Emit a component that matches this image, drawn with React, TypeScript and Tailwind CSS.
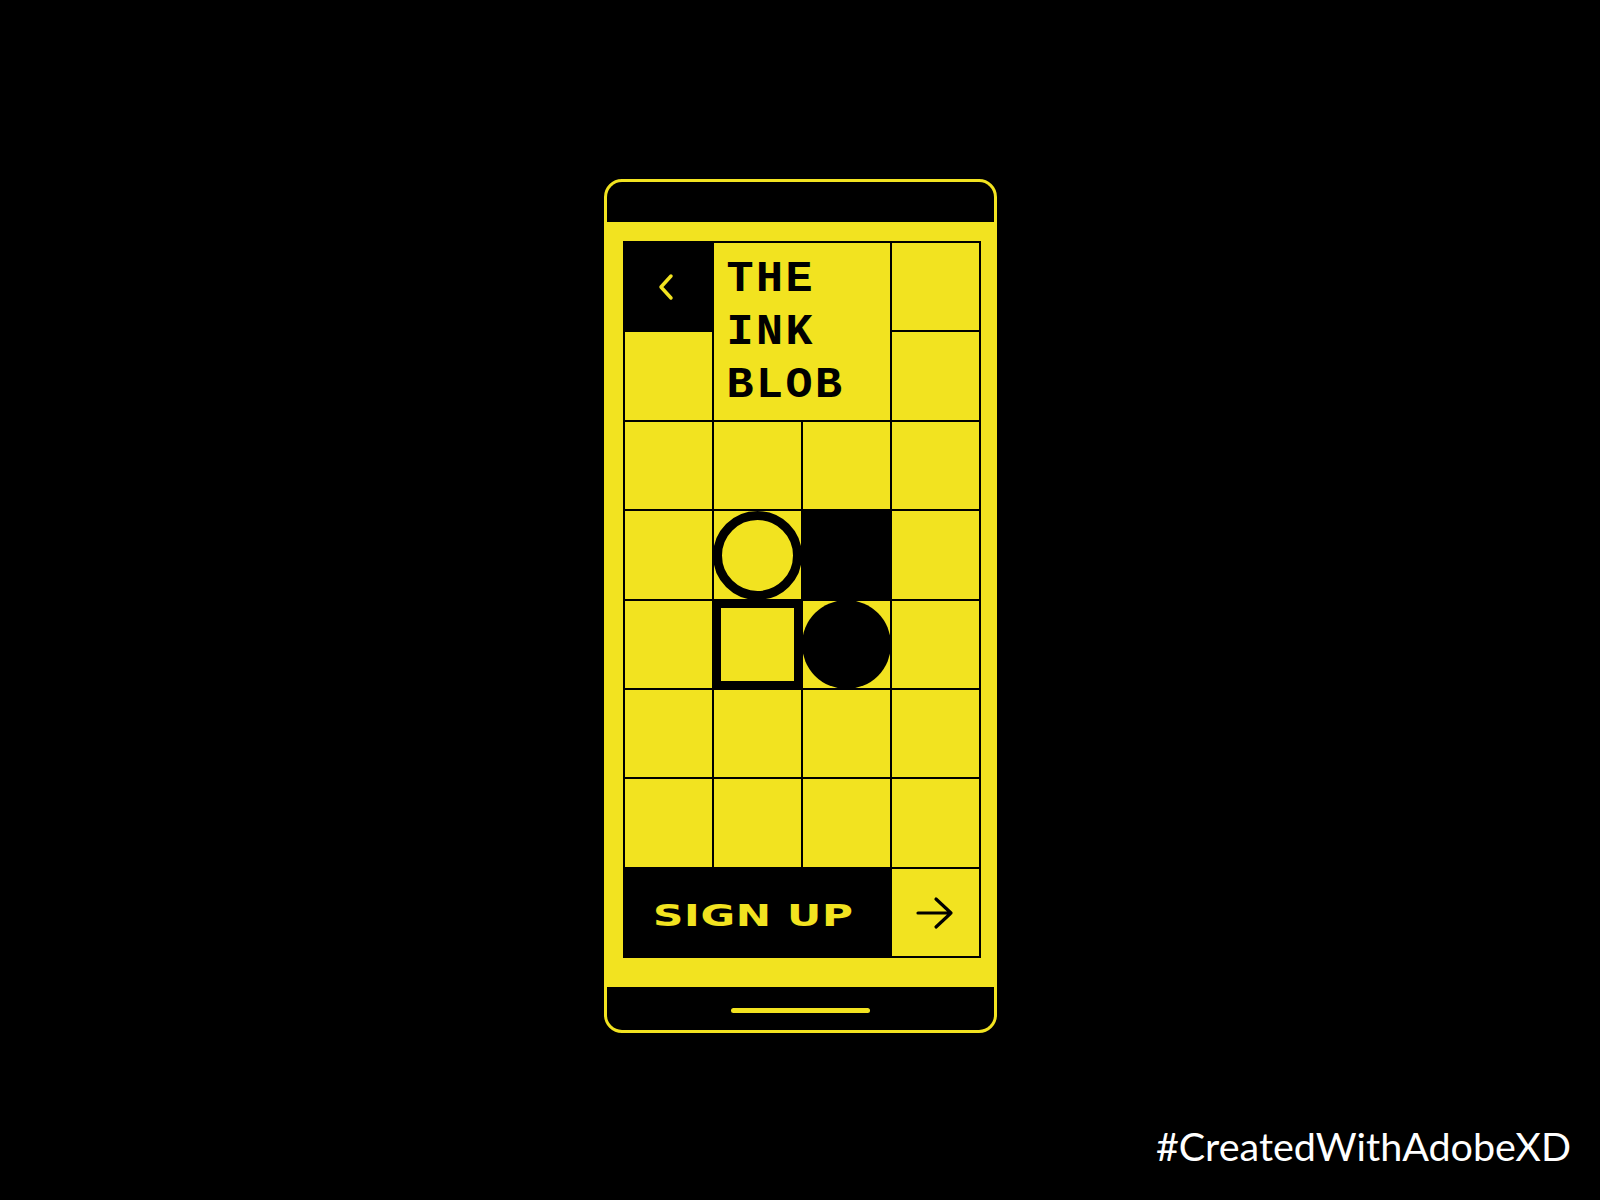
import React from "react";

function Cell({ className = "", children }: { className?: string; children?: React.ReactNode }) {
  return <div className={`bg-[#f2e320] ${className}`}>{children}</div>;
}

function BackChevron() {
  return (
    <svg width="18" height="28" viewBox="0 0 18 28" fill="none">
      <polyline points="14,3 4,14 14,25" stroke="#f2e320" strokeWidth="3.5" strokeLinecap="round" strokeLinejoin="round" />
    </svg>
  );
}

function ArrowRight() {
  return (
    <svg width="38" height="34" viewBox="0 0 38 34" fill="none">
      <path d="M2 17H35M20 3L35 17L20 31" stroke="#000" strokeWidth="3.2" strokeLinecap="round" strokeLinejoin="round" />
    </svg>
  );
}

export default function App() {
  return (
    <div className="relative flex h-[1200px] w-full flex-col items-center bg-black pt-[179px]">
      {/* phone */}
      <div className="flex h-[854px] w-[393px] flex-col overflow-hidden rounded-[18px] border-[3px] border-[#f2e320] bg-[#f2e320]">
        <div className="h-[40px] bg-black" />

        <div className="flex-1 pl-[16px] pt-[19px]">
          <div className="grid w-fit grid-cols-[repeat(4,87px)] grid-rows-[87px_88px_87px_88px_87px_87px_88px_87px] gap-[2px] border-2 border-black bg-black">
            {/* back button */}
            <div className="flex items-center justify-center bg-black pr-[4px]">
              <BackChevron />
            </div>
            {/* title */}
            <Cell className="col-span-2 row-span-2 pl-[13px] pt-[10px]">
              <h1 className="font-['Liberation_Mono',monospace] text-[45px] font-bold leading-[53px] tracking-[2.5px] text-black">
                THE
                <br />
                INK
                <br />
                BLOB
              </h1>
            </Cell>
            <Cell />
            <Cell />
            <Cell />

            {/* row 3 */}
            <Cell />
            <Cell />
            <Cell />
            <Cell />

            {/* row 4 */}
            <Cell />
            <Cell className="flex items-center justify-center">
              <div className="h-[89px] w-[89px] shrink-0 rounded-full border-[9px] border-black" />
            </Cell>
            <div className="bg-black" />
            <Cell />

            {/* row 5 */}
            <Cell />
            <Cell className="border-[7px] border-black" />
            <Cell className="flex items-center justify-center">
              <div className="h-[89px] w-[89px] shrink-0 rounded-full bg-black" />
            </Cell>
            <Cell />

            {/* rows 6-7 */}
            <Cell />
            <Cell />
            <Cell />
            <Cell />
            <Cell />
            <Cell />
            <Cell />
            <Cell />

            {/* sign up */}
            <button className="col-span-3 flex items-center bg-black pl-[28px] pt-[6px] text-left">
              <span className="inline-block origin-left scale-x-[1.36] font-['DejaVu_Sans',sans-serif] text-[31px] font-bold tracking-[0.5px] text-[#f2e320]">
                SIGN UP
              </span>
            </button>
            <Cell className="flex items-center justify-center">
              <ArrowRight />
            </Cell>
          </div>
        </div>

        <div className="flex h-[43px] justify-center bg-black pt-[21px]">
          <div className="h-[5px] w-[139px] rounded-full bg-[#f2e320]" />
        </div>
      </div>

      <p className="mt-[90px] self-end pr-[29px] font-['Lato',sans-serif] text-[39.5px] leading-[46px] text-white">
        #CreatedWithAdobeXD
      </p>
    </div>
  );
}
